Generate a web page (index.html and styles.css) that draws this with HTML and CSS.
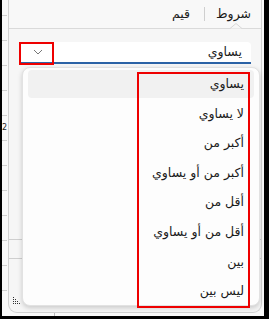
FILE: index.html
```html
<!DOCTYPE html>
<html lang="ar">
<head>
<meta charset="utf-8">
<link rel="stylesheet" href="styles.css">
</head>
<body>
<div class="screen">
  <div class="gutter"><span class="cell-txt">2</span></div>
  <div class="panel" dir="rtl">
    <div class="tabs">
      <span class="tab active">شروط</span>
      <span class="tab-sep"></span>
      <span class="tab">قيم</span>
      <svg class="notch" width="12" height="6" viewBox="0 0 12 6"><polyline points="0,5.5 6,0.5 12,5.5" fill="#f7f7f7" stroke="#d6d6d6" stroke-width="1"/></svg>
    </div>
    <div class="body">
      <div class="select">
        <span class="select-text">يساوي</span>
        <svg class="chev" width="10" height="6" viewBox="0 0 10 6"><polyline points="1,1 5,5 9,1" fill="none" stroke="#777" stroke-width="1"/></svg>
      </div>
      <div class="row-line first"></div>
      <div class="row-line second"></div>
    </div>
    <svg class="grip" width="8" height="8" viewBox="0 0 8 8">
      <rect x="0" y="0" width="1" height="1" fill="#333"/>
      <rect x="0" y="2" width="1" height="1" fill="#333"/>
      <rect x="2" y="2" width="1" height="1" fill="#333"/>
      <rect x="0" y="4" width="1" height="1" fill="#333"/>
      <rect x="2" y="4" width="1" height="1" fill="#333"/>
      <rect x="4" y="4" width="1" height="1" fill="#333"/>
      <rect x="0" y="6" width="1" height="1" fill="#333"/>
      <rect x="2" y="6" width="1" height="1" fill="#333"/>
      <rect x="4" y="6" width="1" height="1" fill="#333"/>
      <rect x="6" y="6" width="1" height="1" fill="#333"/>
    </svg>
  </div>
  <div class="popup" dir="rtl">
    <div class="item selected">يساوي</div>
    <div class="item">لا يساوي</div>
    <div class="item">أكبر من</div>
    <div class="item">أكبر من أو يساوي</div>
    <div class="item">أقل من</div>
    <div class="item">أقل من أو يساوي</div>
    <div class="item">بين</div>
    <div class="item">ليس بين</div>
  </div>
  <div class="mark mark-chev"></div>
  <div class="mark mark-list"></div>
  <div class="bottom-tick"></div>
</div>
</body>
</html>
```
FILE: styles.css
```css
* { box-sizing: border-box; }
html, body { margin: 0; padding: 0; }
body {
  background: #000;
  width: 269px;
  height: 319px;
  overflow: hidden;
  font-family: "DejaVu Sans", sans-serif;
  color: #1b1b1b;
}
.screen {
  position: relative;
  margin-left: 2px;
  width: 262px;
  height: 316px;
  background: #f9f9f9;
  display: flex;
  align-items: flex-start;
}
.gutter {
  width: 6px;
  height: 313px;
  position: relative;
  overflow: hidden;
  background:
    repeating-linear-gradient(to bottom, transparent 0, transparent 24px, #cfcfcf 24px, #cfcfcf 25px);
  background-position: 0 -9px;
  background-size: 5px 100%;
  background-repeat: no-repeat;
}
.cell-txt {
  position: absolute;
  top: 123px;
  left: 0;
  font-size: 8px;
  line-height: 10px;
  color: #222;
  white-space: nowrap;
}
.panel {
  position: relative;
  width: 254px;
  height: 313px;
  background: #f6f6f6;
  border: 1px solid #d2d2d2;
  border-top: none;
  border-radius: 0 0 9px 9px;
}
.tabs {
  position: relative;
  height: 29px;
  border-bottom: 1px solid #dadada;
  display: flex;
  align-items: center;
  padding-right: 10px;
  background: #f8f8f8;
  font-size: 12.5px;
}
.tab { line-height: 16px; padding-bottom: 1px; }
.tab-sep {
  width: 1px;
  height: 14px;
  background: #cfcfcf;
  margin: 0 11px 0 14px;
}
.notch {
  position: absolute;
  right: 19px;
  bottom: -1px;
}
.body {
  position: relative;
  padding: 13px 10px 0 10px;
}
.select {
  height: 22px;
  background: #fff;
  border-radius: 4px 4px 0 0;
  border-bottom: 2px solid #2c63a6;
  display: flex;
  align-items: center;
  justify-content: space-between;
  padding: 0 9px 0 14px;
  font-size: 12.5px;
}
.select-text { line-height: 16px; }
.chev { display: block; }
.row-line {
  position: absolute;
  height: 1px;
  background: #cfcfcf;
}
.row-line.first { top: 210px; left: 0; right: 0; }
.row-line.second { top: 229px; left: 0; right: 0; }
.grip {
  position: absolute;
  left: 4px;
  bottom: 7px;
}
.popup {
  position: absolute;
  left: 20px;
  top: 67px;
  width: 238px;
  height: 239px;
  background: #fdfdfd;
  border: 1px solid #e2e2e2;
  border-radius: 8px;
  box-shadow: 0 2px 5px rgba(0,0,0,0.18);
  padding: 2px 5px;
  display: flex;
  flex-direction: column;
  gap: 1.6px;
  font-size: 12.5px;
}
.item {
  height: 28px;
  line-height: 28px;
  padding: 0 10px;
  border-radius: 4px;
  white-space: nowrap;
}
.item.selected { background: #f1f1f1; }
.mark {
  position: absolute;
  border: 2px solid #ee0000;
}
.mark-chev { left: 17px; top: 42px; width: 35px; height: 23px; }
.mark-list { left: 135px; top: 72px; width: 113px; height: 236px; }
.bottom-tick {
  position: absolute;
  left: 52px;
  top: 313px;
  width: 1px;
  height: 3px;
  background: #bbb;
}
```
